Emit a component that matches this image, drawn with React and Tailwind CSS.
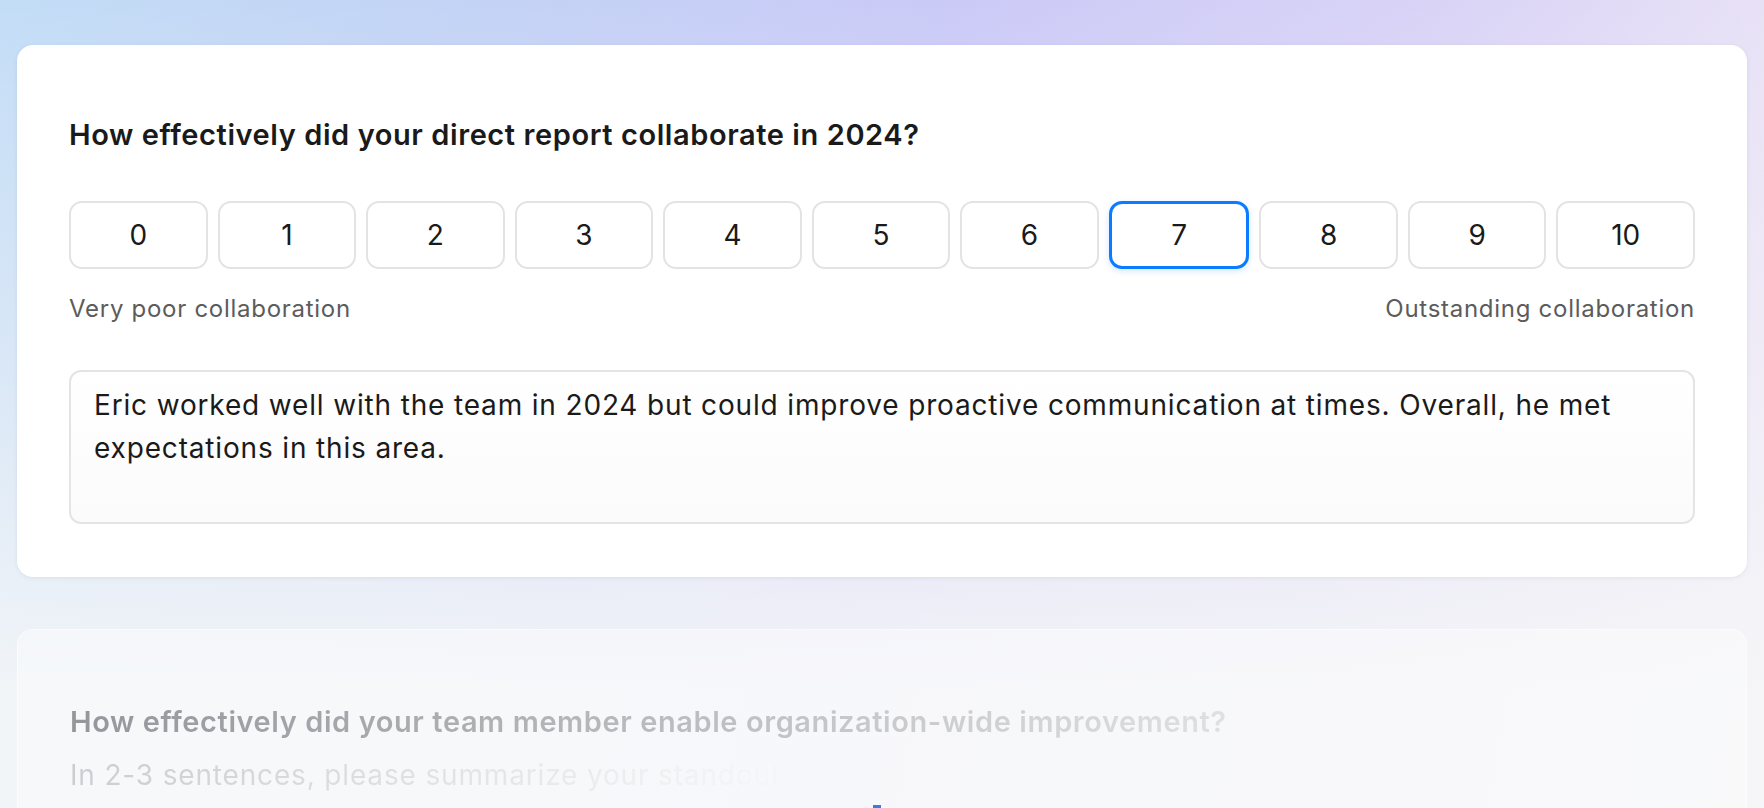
const scores = [0, 1, 2, 3, 4, 5, 6, 7, 8, 9, 10];

const App = () => {
  const selected = 7;

  return (
    <div
      className="relative h-[808px] w-full overflow-hidden bg-[linear-gradient(to_bottom,rgba(245,246,248,0)_0%,rgba(245,246,248,0.45)_45%,rgba(246,247,248,0.9)_85%),linear-gradient(100deg,#c3ddf6_0%,#c3d3f5_25%,#cbcaf7_50%,#d9d3f6_75%,#eee7f6_100%)]"
      style={{ fontFamily: "Inter, 'Noto Sans', sans-serif" }}
    >
      <div className="flex flex-col gap-[52px] px-[17px] pt-[45px]">
        {/* current question */}
        <div className="flex flex-col rounded-[16px] bg-white px-[52px] pt-[74px] pb-[53px] shadow-[0_1px_4px_rgba(40,50,90,0.08)]">
          <h2 className="text-[29px] leading-[32px] font-semibold tracking-[0.02em] text-[#1a1a1a]">
            How effectively did your direct report collaborate in 2024?
          </h2>

          <div className="mt-[50px] flex gap-[10px]">
            {scores.map((n) => (
              <button
                key={n}
                className={
                  n === selected
                    ? "flex h-[68px] flex-1 items-center justify-center rounded-[13px] border-[3px] border-[#0b7cff] bg-white text-[28px] text-[#1a1a1a] shadow-[0_2px_6px_rgba(11,124,255,0.18)]"
                    : "flex h-[68px] flex-1 items-center justify-center rounded-[13px] border-2 border-[#e3e3e3] bg-white text-[28px] text-[#1a1a1a]"
                }
              >
                {n}
              </button>
            ))}
          </div>

          <div className="mt-[25px] flex justify-between text-[24px] leading-[30px] tracking-[0.03em] text-[#5c5c5c]">
            <span>Very poor collaboration</span>
            <span>Outstanding collaboration</span>
          </div>

          <div className="mt-[46px] h-[154px] rounded-[12px] border-2 border-[#e4e4e4] bg-gradient-to-b from-white to-[#fbfbfc] px-[23px] pt-[12px] text-[28px] leading-[43px] tracking-[0.03em] text-[#1a1a1a]">
            Eric worked well with the team in 2024 but could improve proactive communication at times. Overall, he met expectations in this area.
          </div>
        </div>

        {/* next question, faded */}
        <div className="flex flex-col rounded-[16px] border border-white/50 bg-white/40 px-[52px] pt-[76px] pb-[60px]">
          <h2 className="self-start bg-gradient-to-r from-[#93969b] to-[#e0e0e1] bg-clip-text text-[29px] leading-[32px] font-semibold tracking-[0.02em] text-transparent">
            How effectively did your team member enable organization-wide improvement?
          </h2>
          <p className="mt-[19px] self-start bg-gradient-to-r from-[#cacdd1] via-[#e6e7e9] via-50% to-transparent to-80% bg-clip-text text-[28px] leading-[36px] tracking-[0.03em] text-transparent">
            In 2-3 sentences, please summarize your standout contributions
          </p>
        </div>
      </div>

      <div className="absolute left-[873px] top-[805px] h-[3px] w-[8px] bg-[#3a7be0]" />
    </div>
  );
};

export default App;
